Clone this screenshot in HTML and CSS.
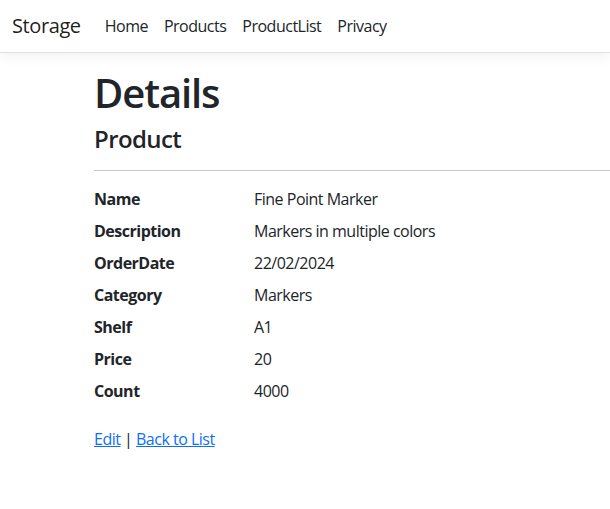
FILE: index.html
```html
<!DOCTYPE html>
<html lang="en">
<head>
<meta charset="utf-8">
<title>Details - Storage</title>
<link rel="stylesheet" href="styles.css">
</head>
<body>
<header class="navbar">
  <a class="brand" href="#">Storage</a>
  <nav class="nav">
    <a class="nav-link" href="#">Home</a>
    <a class="nav-link" href="#">Products</a>
    <a class="nav-link" href="#">ProductList</a>
    <a class="nav-link" href="#">Privacy</a>
  </nav>
</header>
<main class="main">
  <h1 class="title">Details</h1>
  <div>
    <h4 class="subtitle">Product</h4>
    <hr class="divider">
    <dl class="details">
      <dt>Name</dt><dd>Fine Point Marker</dd>
      <dt>Description</dt><dd>Markers in multiple colors</dd>
      <dt>OrderDate</dt><dd>22/02/2024</dd>
      <dt>Category</dt><dd>Markers</dd>
      <dt>Shelf</dt><dd>A1</dd>
      <dt>Price</dt><dd>20</dd>
      <dt>Count</dt><dd>4000</dd>
    </dl>
  </div>
  <div class="actions">
    <a href="#">Edit</a> | <a href="#">Back to List</a>
  </div>
</main>
</body>
</html>
```
FILE: styles.css
```css
* { box-sizing: border-box; }
html, body {
  margin: 0;
  padding: 0;
}
body {
  font-family: "Open Sans", "Noto Sans", "Liberation Sans", sans-serif;
  font-size: 16px;
  line-height: 1.5;
  letter-spacing: -0.5px;
  color: #212529;
  background: #fff;
  overflow: hidden;
}
.navbar {
  display: flex;
  align-items: center;
  height: 53px;
  padding: 0 12px;
  border-bottom: 1px solid #dee2e6;
  box-shadow: 0 4px 12px rgba(0,0,0,.05);
  background: #fff;
}
.brand {
  font-size: 20px;
  line-height: 30px;
  letter-spacing: -0.4px;
  color: rgba(0,0,0,.9);
  text-decoration: none;
  margin-right: 16px;
}
.nav { display: flex; }
.nav-link {
  padding: 8px;
  color: #212529;
  text-decoration: none;
}
.main {
  padding: 16px 0 0 94px;
}
.title {
  font-size: 40px;
  font-weight: 600;
  line-height: 1.2;
  letter-spacing: -1.1px;
  margin: 0 0 8px;
}
.subtitle {
  font-size: 24px;
  font-weight: 600;
  line-height: 1.2;
  letter-spacing: -0.6px;
  margin: 0 0 8px;
}
.divider {
  margin: 16px 0;
  border: 0;
  border-top: 1px solid #c8c8c9;
}
.details {
  display: grid;
  grid-template-columns: 160px 1fr;
  margin: 0 0 16px;
}
.details dt {
  font-weight: 700;
}
.details dd {
  margin: 0 0 8px;
}
.actions a {
  color: #0d6efd;
  text-decoration: underline;
}
```
